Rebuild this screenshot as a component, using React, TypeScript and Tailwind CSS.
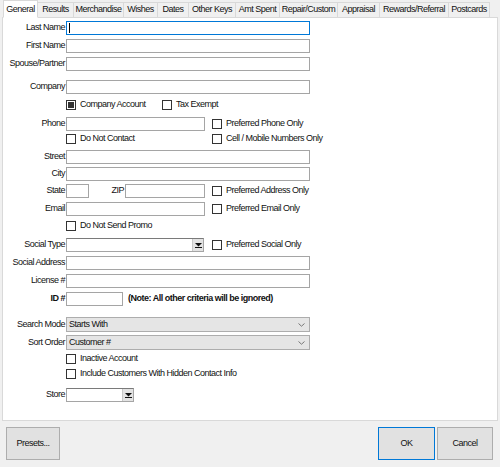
import React from "react";

const tabs = [
  { name: "General", w: "w-[35px]" },
  { name: "Results", w: "w-[37px]" },
  { name: "Merchandise", w: "w-[51px]" },
  { name: "Wishes", w: "w-[35px]" },
  { name: "Dates", w: "w-[32px]" },
  { name: "Other Keys", w: "w-[48px]" },
  { name: "Amt Spent", w: "w-[45px]" },
  { name: "Repair/Custom", w: "w-[59px]" },
  { name: "Appraisal", w: "w-[43px]" },
  { name: "Rewards/Referral", w: "w-[70px]" },
  { name: "Postcards", w: "w-[42px]" },
];

function Label({ children, bold }: { children: React.ReactNode; bold?: boolean }) {
  return (
    <div className={`w-[62px] shrink-0 text-right whitespace-nowrap ${bold ? "font-bold" : ""}`}>
      {children}
    </div>
  );
}

function Box({ w, focused }: { w: string; focused?: boolean }) {
  return (
    <div
      className={`${w} h-[14px] ml-[1px] bg-white border relative ${
        focused ? "border-[#0078d7]" : "border-[#a5a5a5]"
      }`}
    >
      {focused && <div className="absolute left-[2px] top-[1px] w-px h-[10px] bg-black" />}
    </div>
  );
}

function Check({ label, checked }: { label: string; checked?: boolean }) {
  return (
    <div className="flex items-center whitespace-nowrap">
      <div className="w-[10px] h-[10px] border border-[#333] bg-white flex items-center justify-center shrink-0">
        {checked && <div className="w-[6px] h-[6px] bg-[#333]" />}
      </div>
      <span className="ml-[4px]">{label}</span>
    </div>
  );
}

function Combo({ w }: { w: string }) {
  return (
    <div className={`${w} h-[14px] ml-[1px] bg-white border border-[#a5a5a5] border-t-[#7a7a7a] flex justify-end`}>
      <div className="w-[11px] h-full bg-[#e3e3e3] border-l border-[#c8c8c8] flex items-center justify-center">
        <svg width="7" height="5" viewBox="0 0 7 5">
          <path d="M0 0h7L3.5 3.5z" fill="#111" />
          <rect x="0" y="4" width="7" height="1" fill="#111" />
        </svg>
      </div>
    </div>
  );
}

function Select({ value }: { value: string }) {
  return (
    <div className="w-[244px] h-[15px] ml-[1px] bg-[#e5e5e5] border border-[#adadad] flex items-center justify-between pl-[2px] pr-[4px]">
      <span>{value}</span>
      <svg width="7" height="4" viewBox="0 0 7 4">
        <path d="M0.5 0.5L3.5 3.2L6.5 0.5" fill="none" stroke="#777" strokeWidth="1" />
      </svg>
    </div>
  );
}

export default function App() {
  return (
    <div className="w-[500px] h-[467px] bg-[#f0f0f0] font-['Liberation_Sans',Arial,sans-serif] text-[9px] tracking-[-0.5px] text-[#111] overflow-hidden">
      {/* Tabs */}
      <div className="h-[17px] flex items-end pl-[3px] relative z-10">
        {tabs.map((t, i) =>
          i === 0 ? (
            <div
              key={t.name}
              className={`${t.w} h-[18px] mb-[-1px] bg-white border border-[#d9d9d9] border-b-white flex items-start justify-center pt-[2px] shrink-0`}
            >
              {t.name}
            </div>
          ) : (
            <div
              key={t.name}
              className={`${t.w} h-[15px] -ml-px bg-[#f0f0f0] border border-[#d9d9d9] border-b-0 flex items-center justify-center whitespace-nowrap shrink-0`}
            >
              {t.name}
            </div>
          )
        )}
      </div>

      {/* Panel */}
      <div className="ml-[2px] w-[496px] h-[404px] bg-white border border-[#d9d9d9] flex flex-col">
        <div className="flex items-center h-[14px] mt-[3px]">
          <Label>Last Name</Label>
          <Box w="w-[244px]" focused />
        </div>
        <div className="flex items-center h-[14px] mt-[4px]">
          <Label>First Name</Label>
          <Box w="w-[244px]" />
        </div>
        <div className="flex items-center h-[14px] mt-[4px]">
          <Label>Spouse/Partner</Label>
          <Box w="w-[244px]" />
        </div>
        <div className="flex items-center h-[14px] mt-[9px]">
          <Label>Company</Label>
          <Box w="w-[244px]" />
        </div>
        <div className="flex items-center h-[11px] mt-[5px] pl-[63px]">
          <div className="w-[96px]">
            <Check label="Company Account" checked />
          </div>
          <Check label="Tax Exempt" />
        </div>
        <div className="flex items-center h-[14px] mt-[7px]">
          <Label>Phone</Label>
          <Box w="w-[139px]" />
          <div className="ml-[7px]">
            <Check label="Preferred Phone Only" />
          </div>
        </div>
        <div className="flex items-center h-[10px] mt-[3px] pl-[63px]">
          <div className="w-[146px]">
            <Check label="Do Not Contact" />
          </div>
          <Check label="Cell / Mobile Numbers Only" />
        </div>
        <div className="flex items-center h-[14px] mt-[6px]">
          <Label>Street</Label>
          <Box w="w-[244px]" />
        </div>
        <div className="flex items-center h-[14px] mt-[3px]">
          <Label>City</Label>
          <Box w="w-[244px]" />
        </div>
        <div className="flex items-center h-[14px] mt-[3px]">
          <Label>State</Label>
          <Box w="w-[23px]" />
          <div className="w-[35px] text-right">ZIP</div>
          <Box w="w-[80px]" />
          <div className="ml-[7px]">
            <Check label="Preferred Address Only" />
          </div>
        </div>
        <div className="flex items-center h-[14px] mt-[4px]">
          <Label>Email</Label>
          <Box w="w-[139px]" />
          <div className="ml-[7px]">
            <Check label="Preferred Email Only" />
          </div>
        </div>
        <div className="flex items-center h-[10px] mt-[5px] pl-[63px]">
          <Check label="Do Not Send Promo" />
        </div>
        <div className="flex items-center h-[14px] mt-[7px]">
          <Label>Social Type</Label>
          <Combo w="w-[138px]" />
          <div className="ml-[8px]">
            <Check label="Preferred Social Only" />
          </div>
        </div>
        <div className="flex items-center h-[14px] mt-[4px]">
          <Label>Social Address</Label>
          <Box w="w-[244px]" />
        </div>
        <div className="flex items-center h-[14px] mt-[4px]">
          <Label>License #</Label>
          <Box w="w-[244px]" />
        </div>
        <div className="flex items-center h-[14px] mt-[4px]">
          <Label bold>ID #</Label>
          <Box w="w-[57px]" />
          <span className="ml-[5px] font-bold">(Note: All other criteria will be ignored)</span>
        </div>
        <div className="flex items-center h-[15px] mt-[11px]">
          <Label>Search Mode</Label>
          <Select value="Starts With" />
        </div>
        <div className="flex items-center h-[15px] mt-[3px]">
          <Label>Sort Order</Label>
          <Select value="Customer #" />
        </div>
        <div className="flex items-center h-[10px] mt-[4px] pl-[63px]">
          <Check label="Inactive Account" />
        </div>
        <div className="flex items-center h-[10px] mt-[5px] pl-[63px]">
          <Check label="Include Customers With Hidden Contact Info" />
        </div>
        <div className="flex items-center h-[14px] mt-[9px]">
          <Label>Store</Label>
          <Combo w="w-[68px]" />
        </div>
      </div>

      {/* Footer buttons */}
      <div className="flex justify-between pl-[6px] pr-[7px] mt-[6px]">
        <button className="w-[54px] h-[33px] bg-[#e1e1e1] border border-[#adadad]">Presets...</button>
        <div className="flex gap-[2px]">
          <button className="w-[57px] h-[33px] bg-[#e1e1e1] border border-[#0078d7]">OK</button>
          <button className="w-[56px] h-[33px] bg-[#e1e1e1] border border-[#adadad]">Cancel</button>
        </div>
      </div>
    </div>
  );
}
